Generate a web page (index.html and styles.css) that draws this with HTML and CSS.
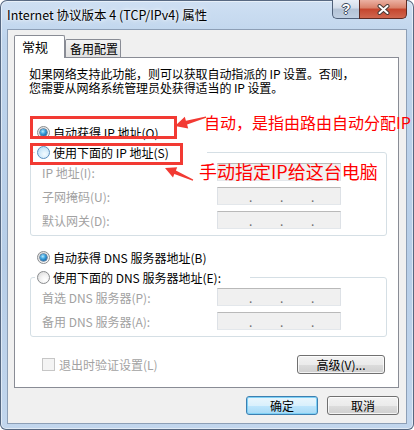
FILE: index.html
```html
<!DOCTYPE html>
<html lang="zh-CN">
<head>
    <meta charset="UTF-8">
    <title>Internet 协议版本 4 (TCP/IPv4) 属性</title>
    <link rel="stylesheet" href="styles.css">
</head>
<body>
    <div class="window">
        <div class="titlebar">
            <span class="title">Internet 协议版本 4 (TCP/IPv4) 属性</span>
            <div class="caption-btns">
                <span class="cap help">?</span>
                <span class="cap close">
                    <svg width="13" height="11" viewBox="0 0 13 11">
                        <path d="M2.5 2 L10.5 9 M10.5 2 L2.5 9" stroke="#4a3a36" stroke-width="4" stroke-linecap="round"/>
                        <path d="M2.5 2 L10.5 9 M10.5 2 L2.5 9" stroke="#fff" stroke-width="2" stroke-linecap="round"/>
                    </svg>
                </span>
            </div>
        </div>

        <div class="client">
            <div class="tabs">
                <span class="tab active">常规</span>
                <span class="tab">备用配置</span>
            </div>

            <div class="panel">
                <p class="desc">如果网络支持此功能，则可以获取自动指派的 IP 设置。否则，<br>您需要从网络系统管理员处获得适当的 IP 设置。</p>

                <label class="radio-row ip-auto"><span class="radio on"></span>自动获得 IP 地址(O)</label>

                <fieldset class="group">
                    <legend class="legend-ip"><span class="radio hover"></span>使用下面的 IP 地址(S)</legend>
                    <!-- first box is covered by the red note -->
                    <div class="field"><span class="field-label">IP 地址(I):</span><span class="ipbox"></span></div>
                    <div class="field"><span class="field-label">子网掩码(U):</span><span class="ipbox"><i>.</i><i>.</i><i>.</i></span></div>
                    <div class="field"><span class="field-label">默认网关(D):</span><span class="ipbox"><i>.</i><i>.</i><i>.</i></span></div>
                </fieldset>

                <label class="radio-row dns-auto"><span class="radio on"></span>自动获得 DNS 服务器地址(B)</label>

                <fieldset class="group">
                    <legend class="legend-dns"><span class="radio"></span>使用下面的 DNS 服务器地址(E):</legend>
                    <div class="field"><span class="field-label">首选 DNS 服务器(P):</span><span class="ipbox"><i>.</i><i>.</i><i>.</i></span></div>
                    <div class="field"><span class="field-label">备用 DNS 服务器(A):</span><span class="ipbox"><i>.</i><i>.</i><i>.</i></span></div>
                </fieldset>

                <div class="bottom-row">
                    <label class="check"><span class="box"></span>退出时验证设置(L)</label>
                    <button class="btn adv">高级(V)...</button>
                </div>
            </div>

            <div class="actions">
                <button class="btn default">确定</button>
                <button class="btn">取消</button>
            </div>
        </div>

        <!-- annotations drawn over the dialog -->
        <svg class="marks" width="414" height="430" viewBox="0 0 414 430">
            <rect x="31.5" y="117.5" width="144" height="20" fill="none" stroke="#f23a33" stroke-width="3"/>
            <rect x="31.5" y="144.5" width="150" height="19" fill="none" stroke="#f23a33" stroke-width="3"/>
            <polygon points="175,126 184.8,116.8 185.9,120.7 205.9,116.5 206.1,117.8 187.1,124.5 188.2,128.4" fill="#f23a33"/>
            <polygon points="165,168 177.2,167.2 175.9,170.5 193.2,179.5 192.8,180.8 174.3,174.1 173,177.4" fill="#f23a33"/>
        </svg>
        <span class="note note-auto">自动，是指由路由自动分配IP</span>
        <span class="note note-manual">手动指定IP给这台电脑</span>
    </div>
</body>
</html>
```

FILE: styles.css
```css
/* Global */
body, html {
    margin: 0;
    padding: 0;
    background: #fff;
    font-family: 'Noto Sans CJK SC', 'Liberation Sans', sans-serif;
    font-size: 12px;
    overflow: hidden;
}

/* Window frame */
.window {
    position: relative;
    width: 414px;
    height: 430px;
    box-sizing: border-box;
    padding: 1px 7px 6px 7px;
    border-radius: 7px 7px 6px 6px;
    background: linear-gradient(to bottom, #cfe0f3 0, #bed4ec 40px, #b7cee8 60%, #c2d6ed 100%);
    box-shadow: inset 0 0 0 1px rgba(40, 60, 90, 0.75), inset 0 0 0 2px rgba(255, 255, 255, 0.5);
}

.titlebar {
    display: flex;
    justify-content: space-between;
    align-items: flex-start;
    height: 28px;
}

.title {
    padding-top: 6px;
    line-height: 16px;
    font-size: 12.5px;
    color: #000;
    text-shadow: 0 0 6px rgba(255, 255, 255, 0.9), 0 0 3px rgba(255, 255, 255, 0.9);
}

.caption-btns {
    display: flex;
    margin-top: -1px;
}

.cap {
    display: flex;
    justify-content: center;
    align-items: center;
    height: 19px;
    box-sizing: border-box;
    border: 1px solid #4f6079;
    border-top: none;
}

.help {
    width: 27px;
    border-right: none;
    border-radius: 0 0 0 5px;
    background: linear-gradient(to bottom, #e8eef6 0%, #d2dce9 45%, #b3c2d5 50%, #bfcfe2 100%);
    color: #fff;
    font-family: 'Liberation Sans', sans-serif;
    font-weight: bold;
    font-size: 14px;
    text-shadow: 1px 0 0 #3b4a5e, -1px 0 0 #3b4a5e, 0 1px 0 #3b4a5e, 0 -1px 0 #3b4a5e;
}

.close {
    width: 48px;
    border-color: #5e2a22;
    border-radius: 0 0 5px 0;
    background: linear-gradient(to bottom, #ebb1a3 0%, #d98069 45%, #c5452d 50%, #d0674f 100%);
}

/* Client area */
.client {
    height: 395px;
    box-sizing: border-box;
    padding: 5px 7px 0 6px;
    background: #f0f0f0;
    border: 1px solid #8d9fb6;
}

.tabs {
    display: flex;
    align-items: flex-end;
    height: 22px;
}

.tab {
    box-sizing: border-box;
    height: 18px;
    width: 56px;
    padding: 1px 0 0 4px;
    line-height: 16px;
    border: 1px solid #898c95;
    border-bottom: none;
    border-radius: 2px 2px 0 0;
    background: linear-gradient(to bottom, #f3f3f3, #e1e1e1);
}

.tab.active {
    position: relative;
    z-index: 1;
    width: 51px;
    height: 23px;
    margin-bottom: -1px;
    padding: 3px 0 0 7px;
    background: #fff;
    font-size: 13px;
}

.panel {
    height: 331px;
    box-sizing: border-box;
    border: 1px solid #898c95;
    background: #fff;
}

.desc {
    margin: 9px 0 0 14px;
    line-height: 14px;
    font-size: 12px;
    letter-spacing: -0.1px;
}

/* Radio buttons */
.radio-row {
    display: flex;
    align-items: center;
    gap: 3px;
    height: 20px;
    margin-left: 22px;
}

.ip-auto {
    margin-top: 27px;
}

.dns-auto {
    margin-top: 11px;
}

.radio {
    position: relative;
    flex: none;
    width: 13px;
    height: 13px;
    box-sizing: border-box;
    border-radius: 50%;
    border: 1px solid #8a8c8e;
    background: radial-gradient(circle at 65% 70%, #ffffff 0, #f4f4f4 40%, #d4d4d4 100%);
}

.radio.hover {
    border-color: #5a8fbf;
    background: radial-gradient(circle at 60% 65%, #f4fbff 0, #d5ecfb 45%, #a9d4f3 100%);
}

.radio.on::after {
    content: '';
    position: absolute;
    left: 2px;
    top: 2px;
    width: 7px;
    height: 7px;
    border-radius: 50%;
    background: radial-gradient(circle at 40% 35%, #b4ecff 0, #3aa0dc 40%, #0d4f8f 90%);
    box-shadow: 0 0 0 0.5px #163c63;
}

/* Group boxes */
.group {
    margin: 0 11px 0 15px;
    padding: 1px 0 6px 11px;
    border: 1px solid #d5dfe5;
    border-radius: 3px;
    display: flex;
    flex-direction: column;
    gap: 6px;
}

.group legend {
    display: flex;
    align-items: center;
    gap: 3px;
    height: 20px;
    box-sizing: border-box;
    margin-left: -7px;
    padding: 0 0 0 2px;
    background: #fff;
}

.legend-ip {
    width: 172px;
}

.legend-dns {
    width: 215px;
}

.field {
    display: flex;
    align-items: center;
    height: 18px;
}

.field-label {
    width: 175px;
    color: #a2a2a2;
}

.ipbox {
    display: flex;
    align-items: flex-end;
    gap: 28px;
    width: 124px;
    height: 18px;
    box-sizing: border-box;
    padding: 0 0 2px 31px;
    background: #f0f0f0;
    border: 1px solid;
    border-color: #b9b9b9 #dde1e6 #e3e7eb #dde1e6;
}

.ipbox i {
    width: 3px;
    font-style: normal;
    line-height: 10px;
    color: #6d6d6d;
}

/* Bottom row of the panel */
.bottom-row {
    display: flex;
    justify-content: space-between;
    align-items: center;
    margin: 18px 13px 0 27px;
}

.check {
    display: flex;
    align-items: center;
    gap: 4px;
    color: #a2a2a2;
}

.check .box {
    width: 13px;
    height: 13px;
    box-sizing: border-box;
    border: 1px solid #c6c6c6;
    background: #f4f4f4;
}

/* Buttons */
.btn {
    display: flex;
    justify-content: center;
    align-items: center;
    height: 19px;
    padding: 0;
    font-family: 'Noto Sans CJK SC', 'Liberation Sans', sans-serif;
    font-size: 12px;
    color: #000;
    border: 1px solid #707070;
    border-radius: 3px;
    background: linear-gradient(to bottom, #f2f2f2 0%, #ebebeb 50%, #dddddd 50%, #cfcfcf 100%);
    box-shadow: inset 0 0 0 1px rgba(255, 255, 255, 0.75);
}

.btn.adv {
    width: 88px;
}

.btn.default {
    border-color: #3c7fb1;
    background: linear-gradient(to bottom, #eaf6fd 0%, #d9f0fc 50%, #bee6fd 50%, #a7d9f5 100%);
    box-shadow: inset 0 0 0 1px #7ed0f5;
}

.actions {
    display: flex;
    justify-content: flex-end;
    gap: 9px;
    margin-top: 8px;
}

.actions .btn {
    width: 72px;
}

/* Red annotations */
.marks {
    position: absolute;
    left: 0;
    top: 0;
    pointer-events: none;
}

.note {
    position: absolute;
    color: #f00;
    white-space: nowrap;
}

.note-auto {
    left: 204px;
    top: 112px;
    font-size: 16px;
    line-height: 20px;
}

.note-manual {
    left: 199px;
    top: 160px;
    font-size: 18px;
    line-height: 22px;
}
```
